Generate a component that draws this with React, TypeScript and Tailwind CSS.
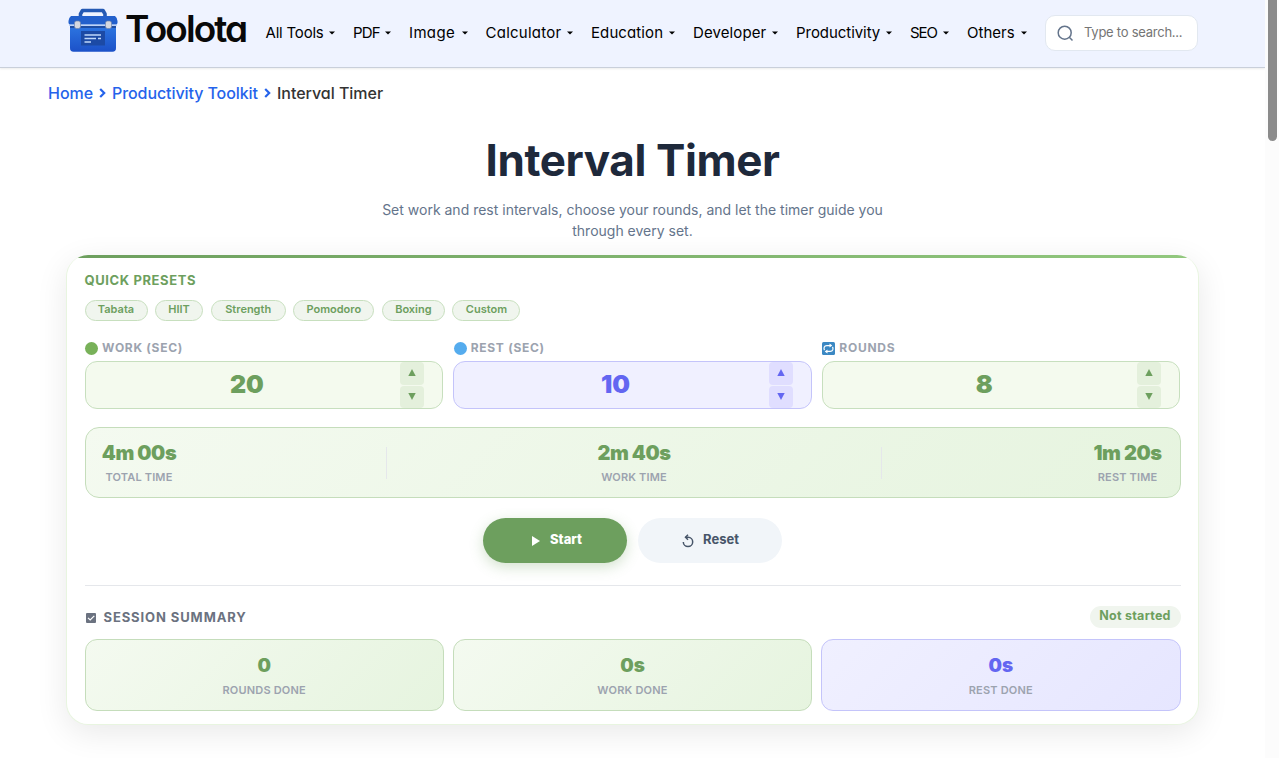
import React from "react";

const navItems = [
  { label: "All Tools", box: "w-[87.5px]", text: "tracking-[-0.2px]" },
  { label: "PDF", box: "w-[56px]", text: "tracking-[-0.8px]" },
  { label: "Image", box: "w-[76.5px]", text: "tracking-[0.35px]" },
  { label: "Calculator", box: "w-[105.5px]", text: "tracking-[0.25px]" },
  { label: "Education", box: "w-[102px]", text: "tracking-[0.1px]" },
  { label: "Developer", box: "w-[103px]", text: "tracking-[0.1px]" },
  { label: "Productivity", box: "w-[114px]", text: "tracking-[-0.05px]" },
  { label: "SEO", box: "w-[57px]", text: "tracking-[-1.1px]" },
  { label: "Others", box: "w-[78px]", text: "tracking-[0px]" },
];

const presets = [
  { label: "Tabata", width: "w-[63px]" },
  { label: "HIIT", width: "w-[48px]" },
  { label: "Strength", width: "w-[75px]" },
  { label: "Pomodoro", width: "w-[81px]" },
  { label: "Boxing", width: "w-[63px]" },
  { label: "Custom", width: "w-[68px]" },
];

function ToolboxLogo() {
  return (
    <svg width="50" height="46" viewBox="0 0 50 46" className="shrink-0">
      <defs>
        <linearGradient id="boxBody" x1="0" y1="0" x2="0" y2="1">
          <stop offset="0" stopColor="#2c74e0" />
          <stop offset="1" stopColor="#1c51c8" />
        </linearGradient>
      </defs>
      <path d="M12.500 10V7L14.500 3.500H35L37 7V10" fill="none" stroke="#2459b4" strokeWidth="3.600" strokeLinejoin="round" />
      <path d="M2 20H48V41Q48 44.800 44.500 44.800H5.500Q2 44.800 2 41Z" fill="url(#boxBody)" />
      <path d="M3 9H47Q49.500 11 49.500 14V15.500Q49.500 17.500 48 17.500H2Q0.500 17.500 0.500 15.500V14Q0.500 11 3 9Z" fill="#2360cc" />
      <path d="M1 18H49" stroke="#8fb4ee" strokeWidth="1" />
      <path d="M2 20H48" stroke="#1e4da3" strokeWidth="2" />
      <rect x="6.500" y="14" width="6" height="7.500" rx="2" fill="#d5d8df" stroke="#7184aa" strokeWidth="0.700" />
      <rect x="37.500" y="14" width="6" height="7.500" rx="2" fill="#d5d8df" stroke="#7184aa" strokeWidth="0.700" />
      <path d="M13 24H37V38.500H13Z" fill="#1c4aa5" />
      <path d="M16.500 28H33M16.500 31.500H28M30 31.500H33M16.500 35H23" stroke="#bed8fa" strokeWidth="1.300" />
    </svg>
  );
}

function Header() {
  return (
    <header className="flex h-[68px] items-start border-b border-[#c9cfda] bg-[#eff3ff] pl-[68px] shadow-[0_1px_2px_rgba(0,0,0,0.08)]">
      <div className="flex w-[197.500px] items-start pt-[7px]">
        <ToolboxLogo />
        <span className="ml-[7px] text-[37px] leading-[43px] font-semibold tracking-[-1.900px] text-[#090909]">Toolota</span>
      </div>
      <nav className="flex h-[66px] items-center text-[15px] text-black">
        {navItems.map((item) => (
          <div key={item.label} className={`${item.box} flex items-center justify-between pr-[18px]`}>
            <span className={`${item.text} whitespace-nowrap`}>{item.label}</span>
            <svg width="6" height="4" viewBox="0 0 6 4" className="shrink-0">
              <path d="M0 0.500H6L3 3.500Z" fill="#000" />
            </svg>
          </div>
        ))}
      </nav>
      <div className="mt-[15px] flex h-9 w-[153px] items-center rounded-[10px] border border-[#e2e8f0] bg-white pl-[11px]">
        <svg width="17" height="17" viewBox="0 0 17 17" fill="none" stroke="#64748b" strokeWidth="1.500">
          <circle cx="7.700" cy="7.700" r="6.500" />
          <path d="M12.300 12.300L15.500 15.500" />
        </svg>
        <span className="ml-[10px] whitespace-nowrap pb-px text-[13px] tracking-[-0.250px] text-[#757575] [font-feature-settings:normal]">Type to search...</span>
      </div>
    </header>
  );
}

function Chevron() {
  return (
    <svg width="7" height="10" viewBox="0 0 7 10" fill="none" stroke="#2563eb" strokeWidth="2.200">
      <path d="M1.200 1L5.200 5L1.200 9" />
    </svg>
  );
}

function Breadcrumb() {
  return (
    <div className="flex h-[50px] items-center pl-12 text-[16px] text-[#2563eb]">
      <span className="w-[51px] pb-px font-medium">Home</span>
      <Chevron />
      <span className="ml-[6px] w-[152px] whitespace-nowrap pb-px font-medium tracking-[-0.080px]">Productivity Toolkit</span>
      <Chevron />
      <span className="ml-[6px] pb-px font-medium tracking-[-0.030px] text-[#333]">Interval Timer</span>
    </div>
  );
}

function FieldLabel({ icon, children }: { icon: React.ReactNode; children: React.ReactNode }) {
  return (
    <div className="flex h-5 items-center gap-1 pl-[0.500px] text-[12px] font-bold tracking-[0.720px] text-[#9ca3af]">
      {icon}
      <span>{children}</span>
    </div>
  );
}

function NumberField({ value, rest = false }: { value: string; rest?: boolean }) {
  const box = rest ? "border-[#c4c4fa] bg-[#f0f0ff] text-[#6366f1]" : "border-[#c7dfbe] bg-[#f4faee] text-[#6d9f5e]";
  const button = rest ? "bg-[#e0deff]" : "bg-[#e4f0dc]";
  return (
    <div className={`${box} mt-[3px] flex h-12 rounded-xl border pr-[18px] pl-[15px]`}>
      <div className="flex flex-1 items-center justify-center text-[25px] font-black tracking-[-0.100px]">{value}</div>
      <div className="ml-[7px] flex w-6 flex-col gap-px">
        <div className={`${button} flex flex-1 items-center justify-center rounded pb-px`}>
          <svg width="8" height="7" viewBox="0 0 8 7"><path d="M4 0L7.700 7H0.300Z" fill="currentColor" /></svg>
        </div>
        <div className={`${button} flex flex-1 items-center justify-center rounded pb-px`}>
          <svg width="8" height="7" viewBox="0 0 8 7"><path d="M4 7L7.700 0H0.300Z" fill="currentColor" /></svg>
        </div>
      </div>
    </div>
  );
}

function Stat({ value, label, width }: { value: string; label: string; width: string }) {
  return (
    <div className={`${width} flex flex-col items-center whitespace-nowrap pt-[3px]`}>
      <span className="text-[20px] leading-6 font-black tracking-[-0.450px] text-[#6d9f5e]">{value}</span>
      <span className="mt-[2px] text-[11px] leading-5 font-semibold tracking-[0.150px] text-[#9ca3af]">{label}</span>
    </div>
  );
}

function DoneCard({ value, label, rest = false }: { value: string; label: string; rest?: boolean }) {
  const look = rest
    ? "border-[#c4c4fa] from-[#f0f0ff] to-[#e6e6ff] text-[#6366f1]"
    : "border-[#c5ddbb] from-[#f4faf0] to-[#e6f4df] text-[#6d9f5e]";
  return (
    <div className={`${look} flex h-[72px] flex-col items-center rounded-xl border bg-linear-135 pt-[14px]`}>
      <span className="text-[19px] leading-6 font-black">{value}</span>
      <span className="mt-[2px] text-[11px] leading-5 font-semibold tracking-[0.200px] text-[#9ca3af]">{label}</span>
    </div>
  );
}

function TimerCard() {
  return (
    <section className="mx-auto mt-[14px] h-[470px] w-[1133px] overflow-hidden rounded-[22px] border border-t-0 border-[#e8f5e0] bg-white shadow-[0_8px_32px_rgba(0,0,0,0.09)]">
      <div className="h-[3px] bg-linear-to-r from-[#6d9f5e] to-[#92c87e]" />
      <div className="px-[17.500px]">
        <div className="mt-[12px] h-5 text-[13px] leading-[21px] font-bold tracking-[0.600px] text-[#6d9f5e]">QUICK PRESETS</div>
        <div className="mt-[10px] flex gap-[7.600px]">
          {presets.map((preset) => (
            <div key={preset.label} className={`${preset.width} flex h-[21px] justify-center rounded-full border border-[#c7dfbe] bg-[#f0f5ee] text-[11px] leading-[17px] font-semibold text-[#6d9f5e]`}>
              {preset.label}
            </div>
          ))}
        </div>
        <div className="mt-[17px] grid grid-cols-3 gap-[10px]">
          <div>
            <FieldLabel icon={<span className="size-[13px] rounded-full bg-[#78b159]" />}>WORK (SEC)</FieldLabel>
            <NumberField value="20" />
          </div>
          <div>
            <FieldLabel icon={<span className="size-[13px] rounded-full bg-[#55acee]" />}>REST (SEC)</FieldLabel>
            <NumberField value="10" rest />
          </div>
          <div>
            <FieldLabel
              icon={
                <svg width="13" height="13" viewBox="0 0 13 13">
                  <rect width="13" height="13" rx="1.500" fill="#3b88c3" />
                  <path d="M2.500 8.200Q1.700 7 2.200 5.300Q2.800 3.600 4.800 3.600H8M10.500 4.800Q11.300 6 10.800 7.700Q10.200 9.400 8.200 9.400H5" fill="none" stroke="#fff" strokeWidth="1.200" />
                  <path d="M7.500 1.600L10.300 3.600L7.500 5.600ZM5.500 7.400L2.700 9.400L5.500 11.400Z" fill="#fff" />
                </svg>
              }
            >
              ROUNDS
            </FieldLabel>
            <NumberField value="8" />
          </div>
        </div>
        <div className="mt-[18px] flex h-[71px] items-center justify-between rounded-[14px] border border-[#c5ddbb] bg-linear-135 from-[#f4faf0] to-[#e6f4df] px-4">
          <Stat value="4m 00s" label="TOTAL TIME" width="w-[75px]" />
          <div className="h-8 w-px bg-[#e5e7eb]" />
          <Stat value="2m 40s" label="WORK TIME" width="w-[75px]" />
          <div className="h-8 w-px bg-[#e5e7eb]" />
          <Stat value="1m 20s" label="REST TIME" width="w-[72px]" />
        </div>
        <div className="mt-5 flex justify-center gap-[11px] text-[13px] font-bold">
          <button className="flex h-[45px] w-[144px] items-center justify-center rounded-full bg-[#6d9f5e] pb-px pl-[4px] text-white shadow-[0_4px_14px_rgba(109,159,94,0.3)]">
            <svg width="8" height="10" viewBox="0 0 8 10" className="mt-[2px] mr-[10px]"><path d="M0 0L8 5L0 10Z" fill="#fff" /></svg>
            <span className="font-extrabold">Start</span>
          </button>
          <button className="flex h-[45px] w-[144px] items-center justify-center rounded-full bg-[#f1f5f9] pb-px pl-px text-[#475569]">
            <svg width="12" height="14" viewBox="0 0 12 14" fill="none" stroke="#475569" strokeWidth="1.500" className="mt-[2px] mr-[9px]">
              <path d="M3.500 3.200H6.200A4.700 4.700 0 1 1 1.300 8" />
              <path d="M6 0.700L3.500 3.200L6 5.700" />
            </svg>
            Reset
          </button>
        </div>
        <div className="mt-[22px] h-px bg-[#e5e7eb]" />
        <div className="mt-5 flex h-[22px] items-center">
          <svg width="10" height="10" viewBox="0 0 10 10" className="mt-[2px] ml-px">
            <rect width="10" height="10" rx="1" fill="#6b7280" />
            <path d="M2 4.800L4.200 7L8.300 2.800" fill="none" stroke="#fff" strokeWidth="1.200" />
          </svg>
          <span className="ml-2 pt-px text-[13px] font-bold tracking-[0.900px] text-[#6b7280]">SESSION SUMMARY</span>
          <span className="ml-auto flex h-[22px] w-[91px] justify-center rounded-full bg-[#f0f5ee] text-[12.500px] leading-5 font-bold tracking-[0.250px] text-[#6d9f5e]">Not started</span>
        </div>
        <div className="mt-[11px] grid grid-cols-3 gap-[9px]">
          <DoneCard value="0" label="ROUNDS DONE" />
          <DoneCard value="0s" label="WORK DONE" />
          <DoneCard value="0s" label="REST DONE" rest />
        </div>
      </div>
    </section>
  );
}

export default function App() {
  return (
    <div className="flex h-[758px] overflow-hidden bg-white font-['Inter','Liberation_Sans',sans-serif]">
      <div className="w-[1265px] shrink-0">
        <div className="[font-feature-settings:'cv11']">
          <Header />
          <Breadcrumb />
        </div>
        <main>
          <h1 className="mt-[14px] text-center text-[44px] leading-[56px] font-bold tracking-[-0.400px] text-[#1e293b]">Interval Timer</h1>
          <p className="mt-[11px] text-center text-[14px] leading-[21px] text-[#64748b]">
            Set work and rest intervals, choose your rounds, and let the timer guide you
            <br />
            through every set.
          </p>
          <TimerCard />
        </main>
      </div>
      <div className="flex w-[14px] shrink-0 justify-center bg-[#fcfcfc] pl-px">
        <div className="h-[141px] w-[9px] rounded-b-full bg-[#8b8b8b]" />
      </div>
    </div>
  );
}
